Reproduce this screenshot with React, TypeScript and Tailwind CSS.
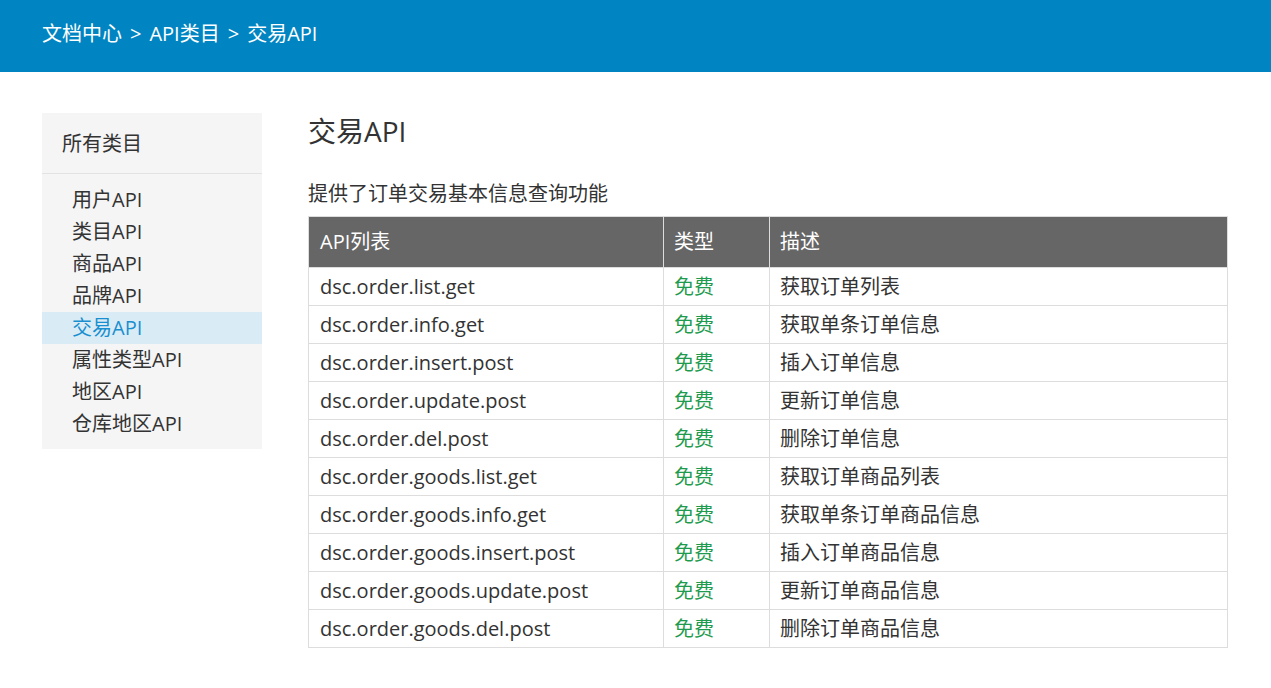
const categories = ["用户API", "类目API", "商品API", "品牌API", "交易API", "属性类型API", "地区API", "仓库地区API"];

const apis = [
  { name: "dsc.order.list.get", desc: "获取订单列表" },
  { name: "dsc.order.info.get", desc: "获取单条订单信息" },
  { name: "dsc.order.insert.post", desc: "插入订单信息" },
  { name: "dsc.order.update.post", desc: "更新订单信息" },
  { name: "dsc.order.del.post", desc: "删除订单信息" },
  { name: "dsc.order.goods.list.get", desc: "获取订单商品列表" },
  { name: "dsc.order.goods.info.get", desc: "获取单条订单商品信息" },
  { name: "dsc.order.goods.insert.post", desc: "插入订单商品信息" },
  { name: "dsc.order.goods.update.post", desc: "更新订单商品信息" },
  { name: "dsc.order.goods.del.post", desc: "删除订单商品信息" },
];

export default function App() {
  return (
    <div
      className="min-h-screen bg-white text-[#333]"
      style={{ fontFamily: '"Open Sans", "Noto Sans CJK SC", sans-serif' }}
    >
      <header className="h-[72px] bg-[#0185c2] flex items-center pb-[4px] px-[42px] text-white text-[20px] gap-[8px]">
        <span>文档中心</span>
        <span>&gt;</span>
        <span>API类目</span>
        <span>&gt;</span>
        <span>交易API</span>
      </header>

      <div className="flex items-start pt-[41px] px-[42px] gap-[46px]">
        <aside className="w-[220px] bg-[#f5f5f5] pb-[9px]">
          <div className="h-[61px] flex items-center pt-[2px] px-[20px] text-[20px] border-b border-[#e3e3e3]">所有类目</div>
          <ul className="pt-[10px]">
            {categories.map((c) => (
              <li
                key={c}
                className={`h-[32px] flex items-center px-[30px] text-[20px] ${
                  c === "交易API" ? "bg-[#d9ecf5] text-[#1a8fcf]" : ""
                }`}
              >
                {c}
              </li>
            ))}
          </ul>
        </aside>

        <main className="w-[920px]">
          <h1 className="text-[28px] leading-[36px]">交易API</h1>
          <p className="text-[20px] leading-[28px] mt-[31px] mb-[8px]">提供了订单交易基本信息查询功能</p>
          <table className="w-full border-collapse text-[20px]">
            <thead>
              <tr className="bg-[#666] text-white h-[51px]">
                <th className="w-[355px] text-left font-normal px-[11px] border border-[#ddd]">API列表</th>
                <th className="w-[106px] text-left font-normal px-[10px] border border-[#ddd]">类型</th>
                <th className="text-left font-normal px-[10px] border border-[#ddd]">描述</th>
              </tr>
            </thead>
            <tbody>
              {apis.map((a) => (
                <tr key={a.name} className="h-[38px]">
                  <td className="px-[11px] border border-[#ddd]">{a.name}</td>
                  <td className="px-[10px] border border-[#ddd] text-[#1f9b4f]">免费</td>
                  <td className="px-[10px] border border-[#ddd]">{a.desc}</td>
                </tr>
              ))}
            </tbody>
          </table>
        </main>
      </div>
    </div>
  );
}
